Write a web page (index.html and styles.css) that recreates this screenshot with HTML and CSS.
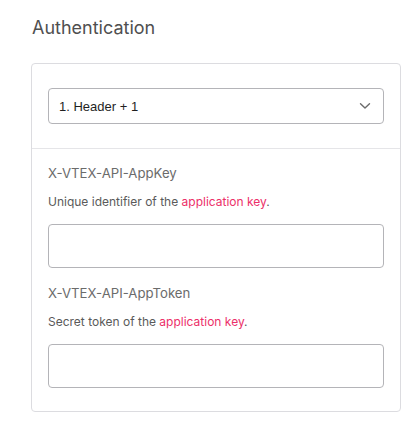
FILE: index.html
```html
<!DOCTYPE html>
<html lang="en">
<head>
<meta charset="utf-8">
<title>Authentication</title>
<link rel="stylesheet" href="styles.css">
</head>
<body>
<div class="page">
  <h2 class="title">Authentication</h2>
  <div class="card">
    <div class="card-top">
      <div class="select">
        <span class="select-value">1. Header + 1</span>
        <svg class="chev" width="12" height="8" viewBox="0 0 12 8" aria-hidden="true">
          <path d="M1.5 1.8 L6 6 L10.5 1.8" fill="none" stroke="#6b6b6b" stroke-width="1.4" stroke-linecap="round" stroke-linejoin="round"/>
        </svg>
      </div>
    </div>
    <div class="card-body">
      <div class="field">
        <div class="label">X-VTEX-API-AppKey</div>
        <div class="desc">Unique identifier of the <a class="link" href="#">application key</a>.</div>
        <div class="input"></div>
      </div>
      <div class="field">
        <div class="label">X-VTEX-API-AppToken</div>
        <div class="desc">Secret token of the <a class="link" href="#">application key</a>.</div>
        <div class="input"></div>
      </div>
    </div>
  </div>
</div>
</body>
</html>
```

FILE: styles.css
```css
* { box-sizing: border-box; }
html, body { margin: 0; padding: 0; background: #ffffff; }
body { font-family: Inter, "Noto Sans", sans-serif; }

.page {
  padding: 16px 18px 0 31px;
}

.title {
  margin: 0 0 23px 1px;
  font-size: 18px;
  line-height: 24px;
  font-weight: 400;
  color: #4f4f4f;
}

.card {
  width: 370px;
  border: 1px solid #dcdce0;
  border-radius: 4px;
}

.card-top {
  padding: 24px 16px;
  border-bottom: 1px solid #e5e5e8;
}

.select {
  height: 36px;
  border: 1px solid #b4b4b8;
  border-radius: 4px;
  display: flex;
  align-items: center;
  justify-content: space-between;
  padding: 0 12px 0 10px;
}

.select-value {
  font-family: "Liberation Sans", Arial, sans-serif;
  font-size: 13px;
  color: #1f1f1f;
}

.chev { display: block; }

.card-body {
  padding: 14px 16px 23px;
  display: flex;
  flex-direction: column;
  gap: 15px;
}

.field {
  display: flex;
  flex-direction: column;
}

.label {
  font-size: 13.2px;
  line-height: 20px;
  color: #6b6b6b;
}

.desc {
  margin-top: 10px;
  font-size: 12px;
  line-height: 18px;
  color: #5a5a5a;
}

.link {
  color: #ec2f69;
  text-decoration: none;
}

.input {
  margin-top: 13px;
  height: 44px;
  border: 1px solid #b4b4b8;
  border-radius: 4px;
}
```
